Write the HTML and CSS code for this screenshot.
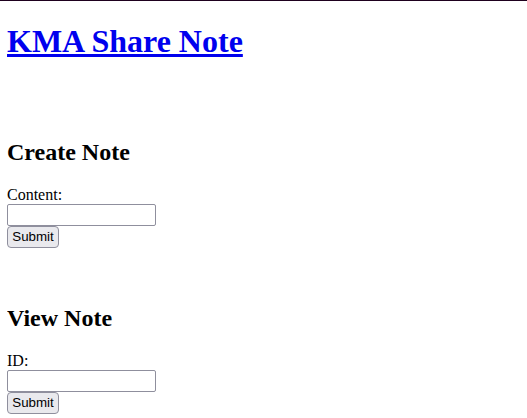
FILE: index.html
```html
<!DOCTYPE html>
<html>
<head>
<meta charset="utf-8">
<title>KMA Share Note</title>
<link rel="stylesheet" href="styles.css">
</head>
<body>
<h1><a href="#">KMA Share Note</a></h1>
<br><br>
<h2>Create Note</h2>
<form>
<label for="content">Content:</label><br>
<input type="text" id="content" name="content"><br>
<button type="submit">Submit</button>
</form>
<br><br>
<h2>View Note</h2>
<form>
<label for="id">ID:</label><br>
<input type="text" id="id" name="id"><br>
<button type="submit">Submit</button>
</form>
</body>
</html>
```
FILE: styles.css
```css
html {
  border-top: 1px solid #1e001e;
}
body {
  margin: 7px;
  font-family: "Liberation Serif", serif;
}
h1 {
  margin-top: 14.5px;
  margin-bottom: 23.5px;
}
form {
  margin: 0 0 1px;
}
a {
  color: #0000ee;
}
input {
  box-sizing: border-box;
  width: 149px;
  height: 22px;
  margin: 0;
  border: 1px solid #8f8f9d;
  border-radius: 2px;
  background: #fff;
  font: 13.33px "Liberation Sans", sans-serif;
  vertical-align: top;
}
button {
  box-sizing: border-box;
  width: 52px;
  height: 22px;
  margin: 0;
  padding: 0 4px;
  border: 1px solid #8f8f9d;
  border-radius: 4px;
  background: #e9e9ed;
  color: #000;
  font: 13.33px "Liberation Sans", sans-serif;
  vertical-align: top;
}
```
